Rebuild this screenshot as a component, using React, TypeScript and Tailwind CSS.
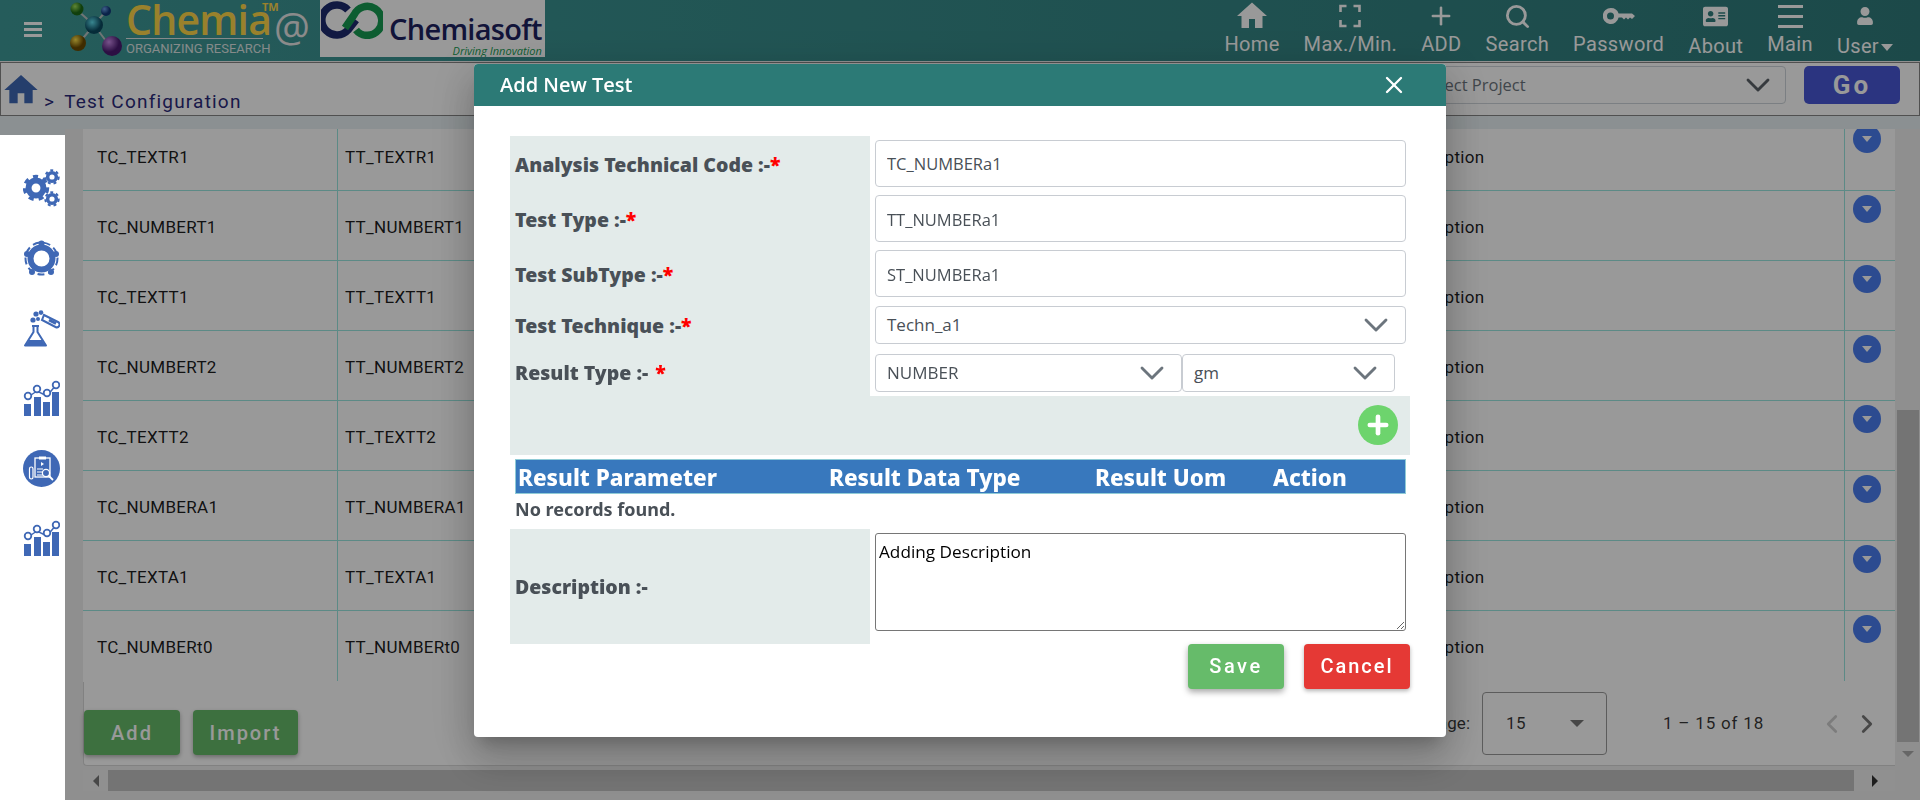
import React from 'react';
import { ChevronDown, ChevronLeft, ChevronRight, Plus, Search, X } from 'lucide-react';
import { FaUser, FaAddressCard } from 'react-icons/fa';
import { MdHome } from 'react-icons/md';

const rows: [string, string][] = [
   ['TC_TEXTR1', 'TT_TEXTR1'],
   ['TC_NUMBERT1', 'TT_NUMBERT1'],
   ['TC_TEXTT1', 'TT_TEXTT1'],
   ['TC_NUMBERT2', 'TT_NUMBERT2'],
   ['TC_TEXTT2', 'TT_TEXTT2'],
   ['TC_NUMBERA1', 'TT_NUMBERA1'],
   ['TC_TEXTA1', 'TT_TEXTA1'],
   ['TC_NUMBERt0', 'TT_NUMBERt0'],
];

const Gear = ({ cx, cy, r }: { cx: number; cy: number; r: number }) => (
   <g>
      <circle cx={cx} cy={cy} r={r * 0.62} fill="none" stroke="#3f68b5" strokeWidth={r * 0.5} />
      <circle cx={cx} cy={cy} r={r * 0.95} fill="none" stroke="#3f68b5" strokeWidth={r * 0.3} strokeDasharray={`${r * 0.42} ${r * 0.42}`} />
   </g>
);

const GearsIcon = () => (
   <svg width="37" height="38" viewBox="0 0 37 38">
      <Gear cx={13} cy={19} r={12} />
      <Gear cx={29} cy={8} r={7} />
      <Gear cx={29} cy={30} r={7} />
   </svg>
);

const CycleIcon = () => (
   <svg width="37" height="37" viewBox="0 0 37 37" fill="#3f68b5">
      <circle cx="18.5" cy="18.5" r="11" fill="none" stroke="#3f68b5" strokeWidth="6" />
      <circle cx="18.5" cy="18.5" r="16" fill="none" stroke="#3f68b5" strokeWidth="2" strokeDasharray="7 4" />
      <circle cx="18.5" cy="3.500" r="3" />
      <circle cx="33" cy="14" r="3" />
      <circle cx="28" cy="32" r="3" />
      <circle cx="9" cy="32" r="3" />
      <circle cx="4" cy="14" r="3" />
   </svg>
);

const FlaskIcon = () => (
   <svg width="37" height="37" viewBox="0 0 37 37">
      <path d="M9 16h7M10.500 16v6L2 35.500h21L14.500 22v-6" fill="none" stroke="#3f68b5" strokeWidth="2" strokeLinejoin="round" />
      <path d="M6 30l-3 5h19l-3-5z" fill="#3f68b5" />
      <circle cx="10" cy="10" r="2.600" fill="#3f68b5" />
      <circle cx="13" cy="4" r="2.600" fill="#3f68b5" />
      <circle cx="18" cy="2.600" r="2.300" fill="#3f68b5" />
      <circle cx="15" cy="9" r="2" fill="#3f68b5" />
      <path d="M21 5l14 7a2.600 2.600 0 0 1-2.500 5L19 10z" fill="none" stroke="#3f68b5" strokeWidth="2" />
      <path d="M26 10l7 3.500" stroke="#3f68b5" strokeWidth="3" />
   </svg>
);

const ChartIcon = () => (
   <svg width="37" height="37" viewBox="0 0 37 37">
      <rect x="1" y="24" width="7" height="12" fill="#3f68b5" />
      <rect x="11" y="17" width="7" height="19" fill="#3f68b5" />
      <rect x="20" y="22" width="7" height="14" fill="#3f68b5" />
      <rect x="29" y="12" width="7" height="24" fill="#3f68b5" />
      <path d="M5 17l9-6 10 5 9-11" fill="none" stroke="#3f68b5" strokeWidth="1.500" />
      {[[5, 16], [14, 9], [24, 13], [33, 5]].map(([cx, cy]) => (
         <circle key={cx} cx={cx} cy={cy} r="3.300" fill="#fff" stroke="#3f68b5" strokeWidth="1.800" />
      ))}
   </svg>
);

const ReportIcon = () => (
   <svg width="37" height="37" viewBox="0 0 37 37">
      <circle cx="18.500" cy="18.500" r="18.500" fill="#3f68b5" />
      <rect x="12" y="8" width="15" height="19" fill="none" stroke="#fff" strokeWidth="1.300" />
      <rect x="16" y="6.500" width="7" height="3" fill="#fff" />
      <path d="M18 12l3 2-3 2z" fill="#fff" />
      <rect x="6.500" y="17" width="3.500" height="12" rx="1.700" fill="none" stroke="#fff" strokeWidth="1.200" />
      <path d="M14 19h6M14 22h6M14 25h6" stroke="#fff" strokeWidth="1.200" />
      <circle cx="23" cy="23" r="3.600" fill="#3f68b5" stroke="#fff" strokeWidth="1.300" />
      <path d="M25.500 25.500l4.500 4.500" stroke="#fff" strokeWidth="1.800" />
   </svg>
);

const Molecule = () => (
   <svg width="54" height="55" viewBox="0 0 54 55" className="shrink-0">
      <defs>
         <radialGradient id="ballGreen" cx="35%" cy="30%"><stop offset="0%" stopColor="#9ee05a" /><stop offset="100%" stopColor="#1c6a16" /></radialGradient>
         <radialGradient id="ballBlue" cx="35%" cy="30%"><stop offset="0%" stopColor="#6aa0e8" /><stop offset="100%" stopColor="#123a7a" /></radialGradient>
         <radialGradient id="ballTeal" cx="40%" cy="35%"><stop offset="0%" stopColor="#5fe0f0" /><stop offset="100%" stopColor="#0b4a60" /></radialGradient>
         <radialGradient id="ballGold" cx="35%" cy="30%"><stop offset="0%" stopColor="#ffe24a" /><stop offset="100%" stopColor="#6a4a00" /></radialGradient>
         <radialGradient id="ballPurple" cx="35%" cy="30%"><stop offset="0%" stopColor="#c98ae8" /><stop offset="100%" stopColor="#4a1a70" /></radialGradient>
      </defs>
      <path d="M8 9L25 24M37 10L25 24M10 42L25 24M40 44L25 24" stroke="#b9c4c4" strokeWidth="2" />
      <circle cx="8" cy="8" r="6.500" fill="url(#ballGreen)" />
      <circle cx="37" cy="10" r="5" fill="url(#ballBlue)" />
      <circle cx="25" cy="24" r="9" fill="url(#ballTeal)" />
      <circle cx="9" cy="42" r="8" fill="url(#ballGold)" />
      <circle cx="43" cy="45" r="10" fill="url(#ballPurple)" />
   </svg>
);

const ChemiasoftRings = () => (
   <svg width="62" height="38" viewBox="0 0 62 38" className="shrink-0">
      <path d="M27 9a15 15 0 1 0 0 20l8-10" fill="none" stroke="#1d2a6e" strokeWidth="7.500" />
      <path d="M24 27l9-13a14.500 14.500 0 1 1 2 15" fill="none" stroke="#169c52" strokeWidth="7.500" />
   </svg>
);

const KeyIcon = () => (
   <svg width="32" height="22" viewBox="0 0 32 22" fill="#fff">
      <path fillRule="evenodd" d="M8 3a8 8 0 0 1 7.600 5.500H29l3 2.500-3 3-2-1.500-2 2-2-2-2 2-2-2h-3.400A8 8 0 1 1 8 3zm-.5 4.500a3.500 3.500 0 1 0 0 7 3.500 3.500 0 0 0 0-7z" />
   </svg>
);

const CornersIcon = () => (
   <svg width="22" height="24" viewBox="0 0 22 24" fill="none" stroke="#fff" strokeWidth="2.600">
      <path d="M1.500 8V2h6M14.500 2h6v6M20.500 16v6h-6M7.500 22h-6v-6" />
   </svg>
);

const HamburgerIcon = () => (
   <div className="flex h-[25px] w-[25px] flex-col justify-between py-[1px]">
      <div className="h-[3px] bg-white" />
      <div className="h-[3px] bg-white" />
      <div className="h-[3px] bg-white" />
   </div>
);

const NavItem = ({ icon, label, low }: { icon: React.ReactNode; label: React.ReactNode; low?: boolean }) => (
   <div className="flex flex-col items-center">
      <div className="flex h-[30px] items-center text-white">{icon}</div>
      <div className={`whitespace-nowrap text-[20px] leading-[26px] tracking-[0.35px] text-white ${low ? 'mt-[2px]' : ''}`}>{label}</div>
   </div>
);

const labelClass = "flex items-center pl-[5px] pt-[2px] bg-[#e3ebea] text-[19.500px] font-black text-[#495057] font-['Noto_Sans',sans-serif]";
const inputClass = "w-[531px] rounded-[4px] border border-[#c8ccd2] bg-white px-[11px] pt-[1px] text-[16.500px] text-[#495057] font-['Open_Sans',sans-serif] outline-none";

const Star = ({ gap }: { gap?: boolean }) => <span className={`text-[#ff0000] ${gap ? 'ml-[7px]' : ''}`}>*</span>;

const FakeSelect = ({ value, className }: { value: string; className: string }) => (
   <div className={`flex h-[38px] items-center justify-between rounded-[4px] border border-[#c8ccd2] bg-white pl-[11px] pr-[9px] text-[17px] text-[#495057] font-['Open_Sans',sans-serif] ${className}`}>
      <span>{value}</span>
      <ChevronDown size={40} strokeWidth={1.700} className="text-[#6c757d]" />
   </div>
);

const Modal = () => (
   <div className="fixed inset-0 z-40 flex items-center justify-center">
      <div className="h-[673px] w-[972px] overflow-hidden rounded-[4px] bg-white shadow-[0_11px_15px_-7px_rgba(0,0,0,0.2),0_24px_38px_3px_rgba(0,0,0,0.14),0_9px_46px_8px_rgba(0,0,0,0.12)]">
         <div className="flex h-[42px] items-center justify-between bg-[#2c7a76] pl-[26px] pr-[38px] text-white">
            <span className="text-[20px] font-semibold font-['Open_Sans',sans-serif]">Add New Test</span>
            <X size={28} strokeWidth={2} />
         </div>
         <div className="mx-[36px] mt-[30px] w-[900px]">
            <div className="grid w-[900px] grid-cols-[360px_540px] grid-rows-[55.5px_55px_55.5px_47px_47px]">
               <div className={labelClass}>Analysis Technical Code :-<Star /></div>
               <div className="pl-[5px] pt-[4px]"><input readOnly defaultValue="TC_NUMBERa1" className={`${inputClass} h-[47px]`} /></div>
               <div className={labelClass}>Test Type :-<Star /></div>
               <div className="pl-[5px] pt-[4px]"><input readOnly defaultValue="TT_NUMBERa1" className={`${inputClass} h-[47px]`} /></div>
               <div className={labelClass}>Test SubType :-<Star /></div>
               <div className="pl-[5px] pt-[4px]"><input readOnly defaultValue="ST_NUMBERa1" className={`${inputClass} h-[47px]`} /></div>
               <div className={labelClass}>Test Technique :-<Star /></div>
               <div className="pl-[5px] pt-[4px]"><FakeSelect value="Techn_a1" className="w-[531px]" /></div>
               <div className={labelClass}>Result Type :-<Star gap /></div>
               <div className="flex pl-[5px] pt-[5px]">
                  <FakeSelect value="NUMBER" className="w-[307px]" />
                  <FakeSelect value="gm" className="w-[213px]" />
               </div>
            </div>
            <div className="flex h-[59px] items-center justify-end bg-[#e3ebea] pr-[12px]">
               <div className="flex h-[40px] w-[40px] items-center justify-center rounded-full bg-[#6dd46d] text-white">
                  <Plus size={28} strokeWidth={4} />
               </div>
            </div>
            <div className="ml-[5px] mt-[4px] flex h-[35px] w-[891px] items-center border border-[#8fcbd6] bg-[#3878bd] pl-[2px] pt-[3px] text-[22.500px] font-extrabold text-white font-['Noto_Sans',sans-serif]">
               <span className="w-[311px]">Result Parameter</span>
               <span className="w-[266px]">Result Data Type</span>
               <span className="w-[178px]">Result Uom</span>
               <span>Action</span>
            </div>
            <div className="flex h-[35px] items-center pb-[3px] pl-[5px] text-[18px] font-bold text-[#495057] font-['Noto_Sans',sans-serif]">No records found.</div>
            <div className="grid h-[115px] grid-cols-[360px_540px]">
               <div className={labelClass}>Description :-</div>
               <div className="pl-[5px] pt-[4px]">
                  <textarea readOnly defaultValue="Adding Description" className="block h-[98px] w-[531px] rounded-[3px] border border-[#767676] px-[3px] pt-[7px] text-[17.200px] leading-[22px] text-black outline-none font-['Open_Sans',sans-serif]" />
               </div>
            </div>
            <div className="flex justify-end gap-[20px]">
               <button className="h-[45px] w-[96px] rounded-[4px] bg-[#66bb6a] text-[20px] font-medium tracking-[2.500px] text-white shadow-[0_3px_6px_rgba(0,0,0,0.35)] font-['Roboto',sans-serif]">Save</button>
               <button className="h-[45px] w-[106px] rounded-[4px] bg-[#e53935] text-[20px] font-medium tracking-[2px] text-white shadow-[0_2px_4px_rgba(0,0,0,0.3)] font-['Roboto',sans-serif]">Cancel</button>
            </div>
         </div>
      </div>
   </div>
);

const App: React.FC = () => {
   return (
      <div className="relative flex h-[800px] w-[1920px] flex-col overflow-hidden bg-[#eeeeee] font-['Roboto',sans-serif]">
         {/* top bar */}
         <header className="flex h-[61px] shrink-0 items-start bg-gradient-to-r from-[#3e9a98] to-[#2f7b7b] pr-[27px]">
            <div className="ml-[24px] mt-[22px] flex h-[15px] w-[18px] flex-col justify-between">
               <div className="h-[3px] bg-white" />
               <div className="h-[3px] bg-white" />
               <div className="h-[3px] bg-white" />
            </div>
            <div className="ml-[27px] mt-[1px]"><Molecule /></div>
            <div className="relative ml-[3px] w-[137px] pt-[5px] font-['Open_Sans',sans-serif]">
               <div className="h-[33px] text-[41px] font-semibold leading-[28px] tracking-[-0.8px] text-[#ffd84a]">Chemia</div>
               <div className="absolute left-[136px] top-[1px] text-[11px] font-bold leading-[12px] text-[#ffd84a]">TM</div>
               <div className="border-t border-[#dfe6e6] pt-[2px] font-['Roboto',sans-serif] text-[13px] leading-[15px] whitespace-nowrap text-[#dfe6e6]">ORGANIZING RESEARCH</div>
            </div>
            <div className="ml-[11px] mt-[3px] text-[40px] leading-[48px] text-[#e8e8e8] font-['Open_Sans',sans-serif]">@</div>
            <div className="ml-[10px] flex h-[57px] w-[225px] items-start overflow-hidden bg-white pl-[1px] pt-[1px]">
               <ChemiasoftRings />
               <div className="ml-[6px] mt-[13px] flex w-[153px] flex-col items-end font-['Open_Sans',sans-serif]">
                  <div className="text-[29px] font-semibold leading-[30px] tracking-[-0.7px] whitespace-nowrap text-[#1d2260]">Chemiasoft</div>
                  <div className="text-[11px] italic leading-[13px] whitespace-nowrap text-[#169c52]">Driving Innovation</div>
               </div>
            </div>
            <nav className="ml-auto flex items-start gap-[24px] pt-[1px]">
               <NavItem icon={<MdHome size={36} />} label="Home" />
               <NavItem icon={<CornersIcon />} label="Max./Min." />
               <NavItem icon={<Plus size={28} strokeWidth={2.200} />} label="ADD" />
               <NavItem icon={<Search size={27} strokeWidth={2.500} />} label="Search" />
               <NavItem icon={<KeyIcon />} label="Password" />
               <NavItem icon={<FaAddressCard size={25} />} label="About" low />
               <NavItem icon={<HamburgerIcon />} label="Main" />
               <NavItem icon={<FaUser size={18} />} label={<span className="flex items-center">User<span className="ml-[2px] mt-[2px] border-x-[6px] border-t-[7px] border-x-transparent border-t-white" /></span>} low />
            </nav>
         </header>

         {/* breadcrumb */}
         <div className="mt-[1px] flex h-[54px] shrink-0 items-start border border-[#858585] bg-white pr-[19px] pt-[3px]">
            <MdHome size={40} className="mt-[4px] shrink-0 text-[#3f68b5]" />
            <span className="ml-[3px] mt-[24px] text-[19px] leading-[24px] tracking-[1.200px] text-[#2b2a7a]">&gt;</span>
            <span className="ml-[9px] mt-[24px] text-[19px] leading-[24px] tracking-[1.200px] text-[#2b2a7a]">Test Configuration</span>
            <div className="ml-auto flex h-[38px] w-[400px] items-center justify-between rounded-[4px] border border-[#ced4da] pl-[35px] pr-[7px] text-[16.500px] text-[#6c757d] font-['Open_Sans',sans-serif]">
               <span>Select Project</span>
               <ChevronDown size={40} strokeWidth={1.700} className="text-[#5a6268]" />
            </div>
            <button className="ml-[18px] h-[38px] w-[96px] rounded-[5px] bg-[#4858d5] text-[26px] font-bold tracking-[3px] text-white">Go</button>
         </div>

         {/* body */}
         <div className="flex min-h-0 flex-1 bg-[#e8f0f3] pt-[13px]">
            <aside className="relative z-50 mt-[6px] flex w-[65px] shrink-0 flex-col items-center gap-[33px] bg-white pl-[18px] pt-[34px]">
               <GearsIcon />
               <CycleIcon />
               <FlaskIcon />
               <ChartIcon />
               <ReportIcon />
               <ChartIcon />
            </aside>
            <main className="flex min-w-0 flex-1 bg-[#eeeeee]">
               <div className="ml-[18px] flex w-[1812px] flex-col">
                  <div className="h-[553px] overflow-hidden bg-white">
                     <div className="mt-[-8px]">
                        {rows.map(([code, type], i) => (
                           <div key={code} className={`grid h-[70px] grid-cols-[254px_1051px_456px_51px] text-[17px] tracking-[0.3px] text-black/90 ${i < rows.length - 1 ? 'border-b border-[#99e6df]' : ''}`}>
                              <div className="pl-[14px] pt-[24px]">{code}</div>
                              <div className="border-l border-[#99e6df] pl-[7px] pt-[24px]">{type}</div>
                              <div className="pl-[7px] pt-[24px]">Description</div>
                              <div className="border-l border-[#99e6df] pl-[8px] pt-[4px]">
                                 <div className="flex h-[28px] w-[28px] items-center justify-center rounded-full bg-[#4a7ef0]">
                                    <span className="border-x-[5px] border-t-[6px] border-x-transparent border-t-white" />
                                 </div>
                              </div>
                           </div>
                        ))}
                     </div>
                  </div>
                  <div className="flex h-[84px] items-start justify-between rounded-bl-[4px] border-b border-l border-[#d8d8d8] bg-white pr-[13px]">
                     <div className="flex gap-[13px] pt-[28px]">
                        <button className="h-[45px] w-[96px] rounded-[4px] bg-[#66bb6a] text-[20px] font-medium tracking-[2px] text-white shadow-[0_2px_4px_rgba(0,0,0,0.3)]">Add</button>
                        <button className="h-[45px] w-[105px] rounded-[4px] bg-[#66bb6a] text-[20px] font-medium tracking-[2px] text-white shadow-[0_2px_4px_rgba(0,0,0,0.3)]">Import</button>
                     </div>
                     <div className="flex items-center pt-[10px] text-[17px] text-black/80">
                        <span>Items per page:</span>
                        <div className="ml-[12px] flex h-[63px] w-[125px] items-center justify-between rounded-[4px] border border-[#9a9a9a] pl-[23px] pr-[22px]">
                           <span className="tracking-[0.5px]">15</span>
                           <span className="border-x-[7px] border-t-[7px] border-x-transparent border-t-[#777]" />
                        </div>
                        <span className="ml-[56px] w-[102px] whitespace-nowrap tracking-[0.8px]">1 – 15 of 18</span>
                        <ChevronLeft size={30} strokeWidth={2.200} className="ml-[52px] text-[#cfcfcf]" />
                        <ChevronRight size={30} strokeWidth={2.200} className="ml-[5px] text-[#777]" />
                     </div>
                  </div>
                  <div className="mt-[4px] flex h-[21px] items-center bg-[#f0f0f0]">
                     <div className="flex w-[25px] justify-center">
                        <span className="border-y-[6px] border-r-[6px] border-y-transparent border-r-[#777]" />
                     </div>
                     <div className="h-full w-[1746px] bg-[#c2c2c2]" />
                     <div className="flex flex-1 justify-center">
                        <span className="border-y-[6px] border-l-[6px] border-y-transparent border-l-[#333]" />
                     </div>
                  </div>
               </div>
               <div className="flex w-[25px] shrink-0 flex-col items-center bg-[#eeeeee] pt-[281px]">
                  <div className="h-[332px] w-[22px] bg-[#c2c2c2]" />
                  <span className="mt-[9px] border-x-[6px] border-t-[6px] border-x-transparent border-t-[#aaa]" />
               </div>
            </main>
         </div>

         {/* backdrop */}
         <div className="fixed inset-0 z-30 bg-black/40" />
         <Modal />
      </div>
   );
};

export default App;
